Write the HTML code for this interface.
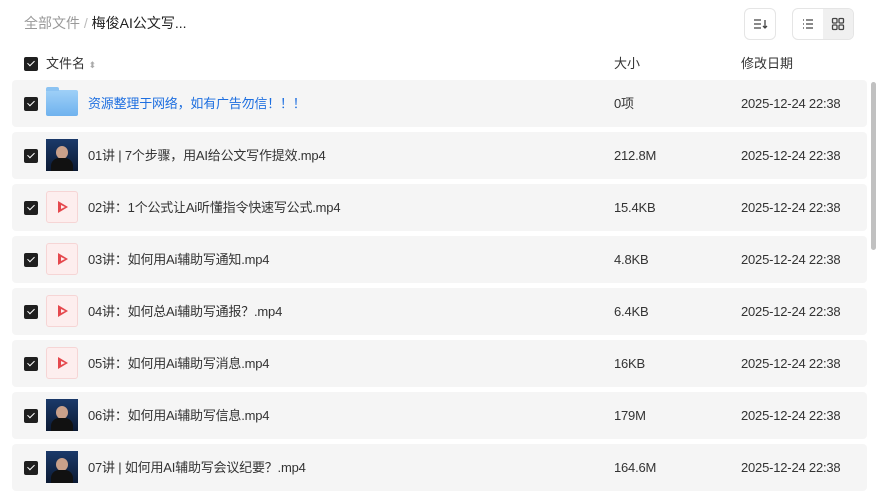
<!DOCTYPE html>
<html><head><meta charset="utf-8"><style>
*{box-sizing:border-box;margin:0;padding:0}
body{width:878px;height:495px;overflow:hidden;background:#fff;font-family:"Liberation Sans","Noto Sans CJK SC",sans-serif;font-size:13px;color:#333;position:relative}
.bc{position:absolute;left:24px;top:13px;font-size:14px;line-height:20px;color:#999}
.bc b{font-weight:normal;color:#222}
.btn{position:absolute;top:8px;height:32px;border:1px solid #e5e5e5;border-radius:6px;background:#fff}
.cb{position:absolute;left:24px;width:14px;height:14px;background:#1f1f1f;border-radius:2px}
.cb:after{content:"";position:absolute;left:4.5px;top:2px;width:3px;height:6px;border:solid #fff;border-width:0 1.6px 1.6px 0;transform:rotate(45deg)}
.hd{position:absolute;top:54px;line-height:20px;font-size:13px;color:#333}
.row{position:absolute;left:12px;width:855px;height:47px;background:#f5f5f5;border-radius:4px}
.row .cb{left:12px;top:17px}
.ic{position:absolute;left:34px;top:7px;width:32px;height:32px}
.nm,.sz,.dt{position:absolute;top:0;line-height:47px;height:47px;letter-spacing:-0.2px}
.nm{left:76px}
.sz{left:602px}
.dt{left:729px}
.vid{background:#fdeeee;border:1px solid #f6d5d5;border-radius:3px}
.vid:after{content:"";position:absolute;left:11px;top:9px;border-left:10px solid #e5484d;border-top:6px solid transparent;border-bottom:6px solid transparent}
.vid:before{content:"";position:absolute;left:13.5px;top:13px;border-left:4px solid #fdeeee;border-top:2.5px solid transparent;border-bottom:2.5px solid transparent;z-index:1}
.th{background:linear-gradient(#1b3a6a,#0b1a33)}
.th:before{content:"";position:absolute;left:10px;top:7px;width:12px;height:13px;border-radius:50%;background:#c9a08a}
.th:after{content:"";position:absolute;left:5px;top:19px;width:22px;height:13px;border-radius:8px 8px 0 0;background:#111}
</style></head><body>
<div class="bc">全部文件 <span style="color:#bbb">/</span> <b>梅俊AI公文写...</b></div>
<div class="btn" style="left:744px;width:32px"><svg width="30" height="30" viewBox="0 0 30 30"><path d="M9 11h7M9 15h7M9 19h7M20 11v8M18 17l2 2 2-2" stroke="#444" stroke-width="1.3" fill="none"/></svg></div>
<div class="btn" style="left:792px;width:62px;overflow:hidden"><div style="position:absolute;left:30px;top:0;width:31px;height:30px;background:#f0f0f0"></div>
<svg style="position:absolute;left:0;top:0" width="60" height="30" viewBox="0 0 60 30"><path d="M10 11h1M10 15h1M10 19h1M13 11h7M13 15h7M13 19h7" stroke="#444" stroke-width="1.3"/><g fill="none" stroke="#444" stroke-width="1.3"><rect x="39.5" y="9.5" width="4.5" height="4.5" rx="1"/><rect x="46" y="9.5" width="4.5" height="4.5" rx="1"/><rect x="39.5" y="16" width="4.5" height="4.5" rx="1"/><rect x="46" y="16" width="4.5" height="4.5" rx="1"/></g></svg></div>
<div class="cb" style="top:57px"></div>
<div class="hd" style="left:46px">文件名 <span style="color:#aaa;font-size:9px">⬍</span></div>
<div class="hd" style="left:614px">大小</div>
<div class="hd" style="left:741px">修改日期</div>
<div style="position:absolute;left:871px;top:82px;width:5px;height:168px;background:#c1c1c1;border-radius:3px"></div>

<div class="row" style="top:80px"><div class="cb"></div><div class="ic" style="background:linear-gradient(#9fd0f7,#6fb2ee);border-radius:2px;top:10px;height:26px"><div style="position:absolute;left:0;top:-3px;width:13px;height:4px;background:#8cc3f2;border-radius:2px 2px 0 0"></div></div><div class="nm" style="color:#1e6fe0">资源整理于网络，如有广告勿信！！！</div><div class="sz">0项</div><div class="dt">2025-12-24 22:38</div></div>
<div class="row" style="top:132px"><div class="cb"></div><div class="ic th"></div><div class="nm">01讲 | 7个步骤，用AI给公文写作提效.mp4</div><div class="sz">212.8M</div><div class="dt">2025-12-24 22:38</div></div>
<div class="row" style="top:184px"><div class="cb"></div><div class="ic vid"></div><div class="nm">02讲：1个公式让Ai听懂指令快速写公式.mp4</div><div class="sz">15.4KB</div><div class="dt">2025-12-24 22:38</div></div>
<div class="row" style="top:236px"><div class="cb"></div><div class="ic vid"></div><div class="nm">03讲：如何用Ai辅助写通知.mp4</div><div class="sz">4.8KB</div><div class="dt">2025-12-24 22:38</div></div>
<div class="row" style="top:288px"><div class="cb"></div><div class="ic vid"></div><div class="nm">04讲：如何总Ai辅助写通报？.mp4</div><div class="sz">6.4KB</div><div class="dt">2025-12-24 22:38</div></div>
<div class="row" style="top:340px"><div class="cb"></div><div class="ic vid"></div><div class="nm">05讲：如何用Ai辅助写消息.mp4</div><div class="sz">16KB</div><div class="dt">2025-12-24 22:38</div></div>
<div class="row" style="top:392px"><div class="cb"></div><div class="ic th"></div><div class="nm">06讲：如何用Ai辅助写信息.mp4</div><div class="sz">179M</div><div class="dt">2025-12-24 22:38</div></div>
<div class="row" style="top:444px"><div class="cb"></div><div class="ic th"></div><div class="nm">07讲 | 如何用AI辅助写会议纪要？.mp4</div><div class="sz">164.6M</div><div class="dt">2025-12-24 22:38</div></div>
</body></html>
